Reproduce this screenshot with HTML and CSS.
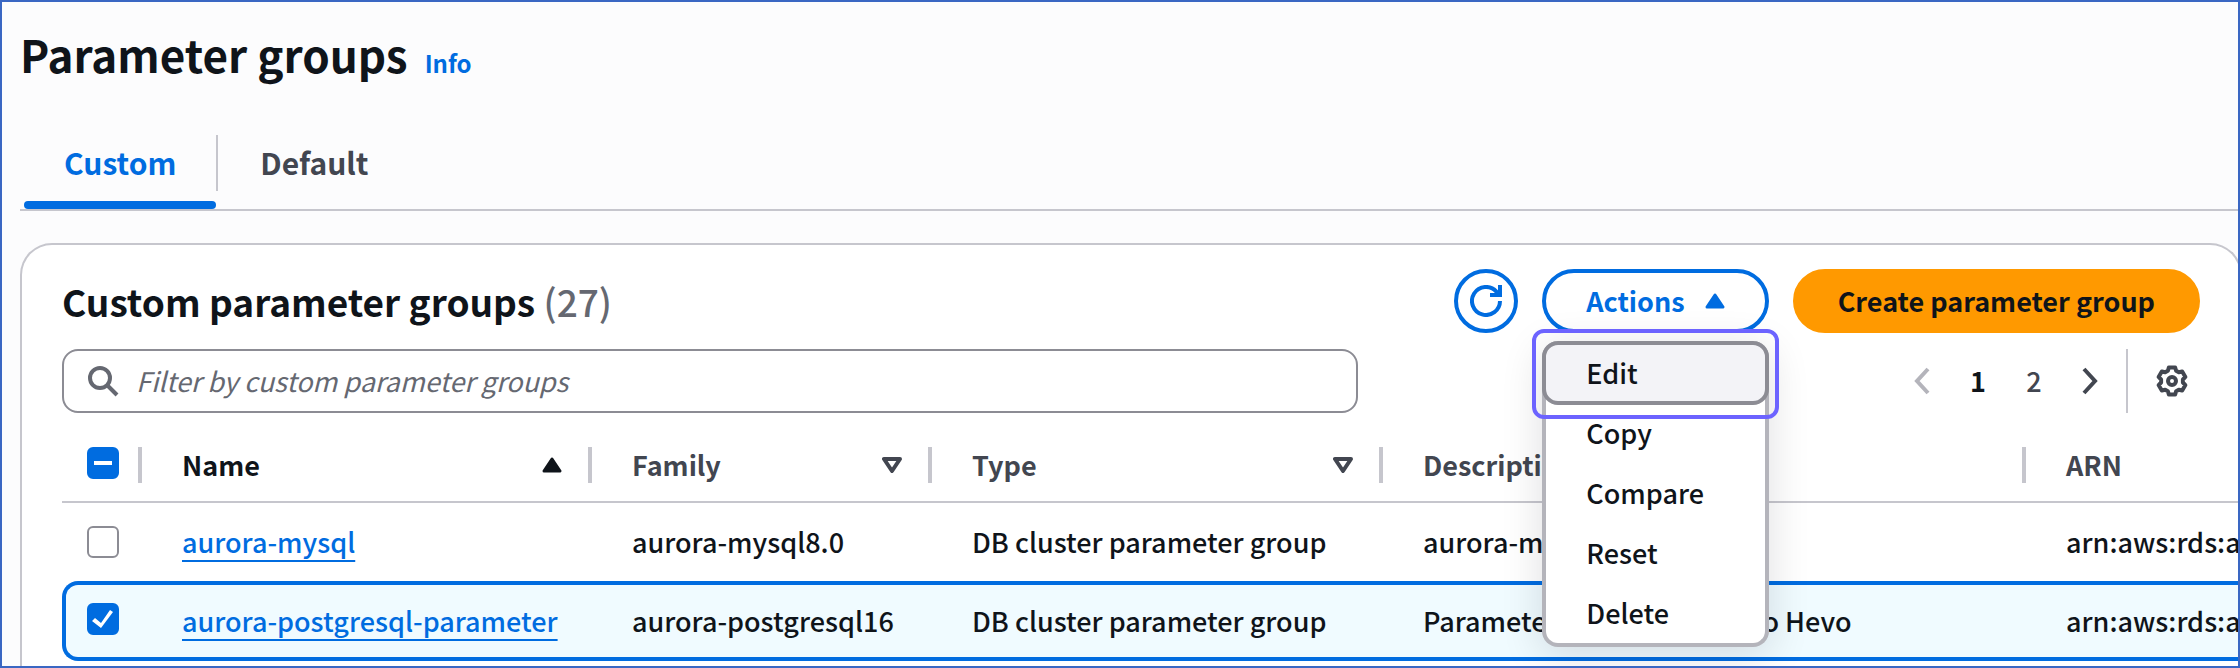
FILE: index.html
```html
<!DOCTYPE html>
<html lang="en">
<head>
    <meta charset="UTF-8">
    <meta name="viewport" content="width=device-width, initial-scale=1.0">
    <title>Parameter groups</title>
    <link rel="stylesheet" href="styles.css">
</head>
<body>
    <main class="page">
        <header class="page-header">
            <h1>Parameter groups</h1>
            <a class="info-link" href="#info">Info</a>
        </header>

        <div class="tabs" role="tablist">
            <button type="button" class="tab active" role="tab" aria-selected="true">Custom</button>
            <button type="button" class="tab" role="tab" aria-selected="false">Default</button>
        </div>

        <section class="card">
            <div class="card-header">
                <h2>Custom parameter groups <span class="count">(27)</span></h2>
                <div class="actions">
                    <button type="button" class="btn btn-icon" aria-label="Refresh">
                        <svg class="icon" viewBox="0 0 32 32" fill="none" stroke="currentColor" stroke-width="4">
                            <path d="M30 16a14 14 0 1 1-3.6-9.4l3 3.4"/>
                            <path d="M30 0v10H20"/>
                        </svg>
                    </button>
                    <div class="dropdown">
                        <button type="button" class="btn btn-menu" aria-haspopup="true" aria-expanded="true">
                            Actions
                            <svg class="caret" viewBox="0 0 20 16"><path d="M10 2l8 12H2z" fill="currentColor" stroke="currentColor" stroke-width="3" stroke-linejoin="round"/></svg>
                        </button>
                        <ul class="menu" role="menu">
                            <li><button type="button" class="menu-item highlighted" role="menuitem">Edit</button></li>
                            <li><button type="button" class="menu-item" role="menuitem">Copy</button></li>
                            <li><button type="button" class="menu-item" role="menuitem">Compare</button></li>
                            <li><button type="button" class="menu-item" role="menuitem">Reset</button></li>
                            <li><button type="button" class="menu-item" role="menuitem">Delete</button></li>
                        </ul>
                        <div class="callout"></div>
                    </div>
                    <button type="button" class="btn btn-primary">Create parameter group</button>
                </div>
            </div>

            <div class="toolbar">
                <label class="search">
                    <svg class="icon" viewBox="0 0 32 32" fill="none" stroke="currentColor" stroke-width="4">
                        <circle cx="12" cy="13" r="10"/>
                        <path d="M19 20l10 10"/>
                    </svg>
                    <input type="text" placeholder="Filter by custom parameter groups" aria-label="Filter by custom parameter groups">
                </label>
                <nav class="pagination">
                    <button type="button" class="page-btn disabled" aria-label="Previous page">
                        <svg class="chevron" viewBox="0 0 16 28" fill="none" stroke="currentColor" stroke-width="4"><path d="M14 2L3 14l11 12"/></svg>
                    </button>
                    <button type="button" class="page-btn current">1</button>
                    <button type="button" class="page-btn">2</button>
                    <button type="button" class="page-btn" aria-label="Next page">
                        <svg class="chevron" viewBox="0 0 16 28" fill="none" stroke="currentColor" stroke-width="4"><path d="M2 2l11 12L2 26"/></svg>
                    </button>
                    <button type="button" class="settings" aria-label="Preferences">
                        <svg class="icon" viewBox="0 0 32 32" fill="none" stroke="currentColor" stroke-width="4" stroke-linejoin="round">
                            <path d="M11.9 5.8L12.9 2.4H19.1L20.1 5.8L22.8 7.3L26.2 6.5L29.4 11.9L26.9 14.5V17.5L29.4 20.1L26.2 25.5L22.8 24.7L20.1 26.2L19.1 29.6H12.9L11.9 26.2L9.2 24.7L5.8 25.5L2.6 20.1L5.1 17.5V14.5L2.6 11.9L5.8 6.5L9.2 7.3Z"/>
                            <circle cx="16" cy="16" r="4"/>
                        </svg>
                    </button>
                </nav>
            </div>

            <div class="table-wrap">
                <table>
                    <colgroup>
                        <col class="col-check">
                        <col class="col-name">
                        <col class="col-family">
                        <col class="col-type">
                        <col class="col-desc">
                        <col class="col-arn">
                    </colgroup>
                    <thead>
                        <tr>
                            <th class="check"><div><input type="checkbox" class="mixed" aria-label="Select all"></div></th>
                            <th class="sorted"><div>Name
                                <svg class="caret" viewBox="0 0 20 16"><path d="M10 2l8 12H2z" fill="currentColor" stroke="currentColor" stroke-width="3" stroke-linejoin="round"/></svg>
                            </div></th>
                            <th><div>Family
                                <svg class="caret" viewBox="0 0 20 16"><path d="M2 2h16l-8 12z" fill="none" stroke="currentColor" stroke-width="4" stroke-linejoin="round"/></svg>
                            </div></th>
                            <th><div>Type
                                <svg class="caret" viewBox="0 0 20 16"><path d="M2 2h16l-8 12z" fill="none" stroke="currentColor" stroke-width="4" stroke-linejoin="round"/></svg>
                            </div></th>
                            <th><div>Description</div></th>
                            <th><div>ARN</div></th>
                        </tr>
                    </thead>
                    <tbody>
                        <tr>
                            <td class="check"><input type="checkbox" aria-label="Select aurora-mysql"></td>
                            <td><a href="#aurora-mysql">aurora-mysql</a></td>
                            <td>aurora-mysql8.0</td>
                            <td>DB cluster parameter group</td>
                            <td>aurora-mysql</td>
                            <td>arn:aws:rds:ap</td>
                        </tr>
                        <tr class="selected">
                            <td class="check"><input type="checkbox" checked aria-label="Select aurora-postgresql-parameter"></td>
                            <td><a href="#aurora-postgresql-parameter">aurora-postgresql-parameter</a></td>
                            <td>aurora-postgresql16</td>
                            <td>DB cluster parameter group</td>
                            <td>Parameter group to write to Hevo</td>
                            <td>arn:aws:rds:ap</td>
                        </tr>
                    </tbody>
                </table>
            </div>
        </section>
    </main>
</body>
</html>
```

FILE: styles.css
```css
* {
    box-sizing: border-box;
}
body {
    margin: 0;
    font-family: "Noto Sans CJK SC", "Noto Sans", sans-serif;
    font-size: 27px;
    font-weight: 500;
    line-height: 40px;
    color: #0f141a;
}
button,
input {
    font: inherit;
    color: inherit;
}
button {
    padding: 0;
    border: none;
    background: none;
    cursor: pointer;
}
a {
    color: #006ce0;
}
.page {
    display: flex;
    flex-direction: column;
    height: 100vh;
    overflow: hidden;
    padding-left: 18px;
    border: 2px solid #3a67c3;
    background: #fcfcfd;
}

/* header */
.page-header {
    display: flex;
    align-items: baseline;
    gap: 17px;
    padding: 22px 0 51px;
}
h1,
h2 {
    margin: 0;
    font-weight: 700;
}
h1 {
    font-size: 44px;
    line-height: 60px;
}
.info-link {
    font-size: 24px;
    line-height: 32px;
    font-weight: 700;
    text-decoration: none;
}

/* tabs */
.tabs {
    display: flex;
    padding: 0 4px;
    border-bottom: 2px solid #c6c6cd;
}
.tab {
    position: relative;
    padding: 7px 40px 27px;
    font-size: 30px;
    font-weight: 700;
    color: #424650;
}
.tab.active {
    color: #006ce0;
}
.tab.active::after {
    content: "";
    position: absolute;
    left: 0;
    right: 0;
    bottom: 0;
    height: 8px;
    border-radius: 4px;
    background: #006ce0;
}
.tab + .tab {
    padding-left: 44px;
}
.tab + .tab::before {
    content: "";
    position: absolute;
    left: 0;
    top: 0;
    height: 56px;
    border-left: 2px solid #c6c6cd;
}

/* card */
.card {
    flex: 1;
    margin: 32px -4px 0 0;
    padding: 24px 40px 0;
    border: 2px solid #c6c6cd;
    border-bottom: none;
    border-radius: 32px 32px 0 0;
    background: #fff;
}
.card-header {
    display: flex;
    align-items: center;
    justify-content: space-between;
}
h2 {
    font-size: 37px;
    line-height: 48px;
}
.count {
    font-weight: 500;
    color: #656871;
}
.actions {
    display: flex;
    gap: 24px;
}
.btn {
    height: 64px;
    padding: 0 40px;
    border: 4px solid #006ce0;
    border-radius: 32px;
    background: #fff;
    font-weight: 700;
    color: #006ce0;
}
.btn-icon {
    display: flex;
    align-items: center;
    justify-content: center;
    width: 64px;
    padding: 0;
}
.btn-menu {
    display: flex;
    align-items: center;
    gap: 20px;
}
.btn-primary {
    padding: 0 41px;
    border-color: #ff9900;
    background: #ff9900;
    color: #0f141a;
}
.icon {
    width: 32px;
    height: 32px;
    flex: none;
}
.caret {
    width: 20px;
    height: 16px;
    flex: none;
}

/* dropdown */
.dropdown {
    position: relative;
}
.menu {
    position: absolute;
    z-index: 2;
    top: 72px;
    left: 0;
    width: 100%;
    margin: 0;
    padding: 0;
    list-style: none;
    border: 4px solid #b4b4bb;
    border-top: none;
    border-radius: 16px;
    background: #fff;
    box-shadow: 0 8px 40px 2px rgba(0, 7, 22, 0.12);
}
.menu-item {
    display: block;
    width: 100%;
    height: 60px;
    padding: 0 40px;
    text-align: left;
}
.menu-item.highlighted {
    width: calc(100% + 8px);
    height: 64px;
    margin: 0 -4px -2px;
    border: 4px solid #8c8c94;
    border-radius: 16px;
    background: #f3f3f7;
}
.callout {
    position: absolute;
    z-index: 3;
    top: 60px;
    left: -10px;
    right: -10px;
    height: 90px;
    border: 4px solid #6c63ff;
    border-radius: 12px;
    pointer-events: none;
}

/* toolbar */
.toolbar {
    display: flex;
    justify-content: space-between;
    gap: 40px;
    padding: 16px 0;
}
.search {
    display: flex;
    flex: 0 1 1296px;
    align-items: center;
    gap: 16px;
    height: 64px;
    padding: 0 24px;
    border: 2px solid #8c8c94;
    border-radius: 16px;
    color: #656871;
}
.search input {
    flex: 1;
    padding: 0;
    border: none;
    outline: none;
    background: none;
}
.search input::placeholder {
    font-style: italic;
    font-weight: 400;
    color: #656871;
}
.pagination {
    display: flex;
    align-items: center;
}
.page-btn {
    width: 56px;
    color: #424650;
}
.page-btn.disabled {
    color: #b4b4bb;
}
.page-btn.current {
    font-weight: 700;
    color: #0f141a;
}
.chevron {
    display: block;
    width: 16px;
    height: 28px;
    margin: 0 auto;
}
.settings {
    height: 64px;
    margin-left: 8px;
    padding: 0 12px 0 28px;
    border-left: 2px solid #c6c6cd;
    color: #424650;
}
.settings .icon {
    display: block;
}

/* table */
.table-wrap {
    overflow: hidden;
    margin-right: -40px;
}
table {
    width: 2360px;
    table-layout: fixed;
    border-spacing: 0;
}
.col-check {
    width: 80px;
}
.col-name {
    width: 450px;
}
.col-family {
    width: 340px;
}
.col-type {
    width: 451px;
}
.col-desc {
    width: 643px;
}
th,
td {
    padding: 0;
    text-align: left;
    white-space: nowrap;
}
th {
    height: 74px;
    border-bottom: 2px solid #c6c6cd;
    color: #424650;
}
th div {
    display: flex;
    align-items: center;
    justify-content: space-between;
    height: 36px;
    padding: 0 26px 0 40px;
    border-right: 4px solid #c6c6cd;
}
th.check div {
    align-items: flex-start;
    padding: 0 0 0 25px;
}
th.sorted {
    color: #0f141a;
}
td {
    height: 78px;
    padding-left: 40px;
}
td.check {
    padding-left: 25px;
}
td a {
    text-decoration-thickness: 2px;
    text-underline-offset: 7px;
    text-decoration-skip-ink: none;
}
.selected td {
    height: 80px;
    border-top: 4px solid #006ce0;
    border-bottom: 4px solid #006ce0;
    background: #f0fbff;
}
.selected td.check {
    padding: 0 0 4px 21px;
    border-left: 4px solid #006ce0;
    border-radius: 16px 0 0 16px;
}

/* checkbox */
input[type="checkbox"] {
    appearance: none;
    display: block;
    width: 32px;
    height: 32px;
    margin: 0;
    border: 2px solid #8c8c94;
    border-radius: 6px;
    background: #fff;
}
input[type="checkbox"]:checked,
input.mixed {
    border-color: #006ce0;
    background: #006ce0;
}
input.mixed::before {
    content: "";
    display: block;
    width: 18px;
    height: 4px;
    margin: 12px 5px;
    background: #fff;
}
input[type="checkbox"]:checked::before {
    content: "";
    display: block;
    width: 28px;
    height: 28px;
    background: #fff;
    clip-path: polygon(3px 16px, 6px 13px, 12px 18px, 21px 5px, 24px 7px, 12px 23px);
}
```
